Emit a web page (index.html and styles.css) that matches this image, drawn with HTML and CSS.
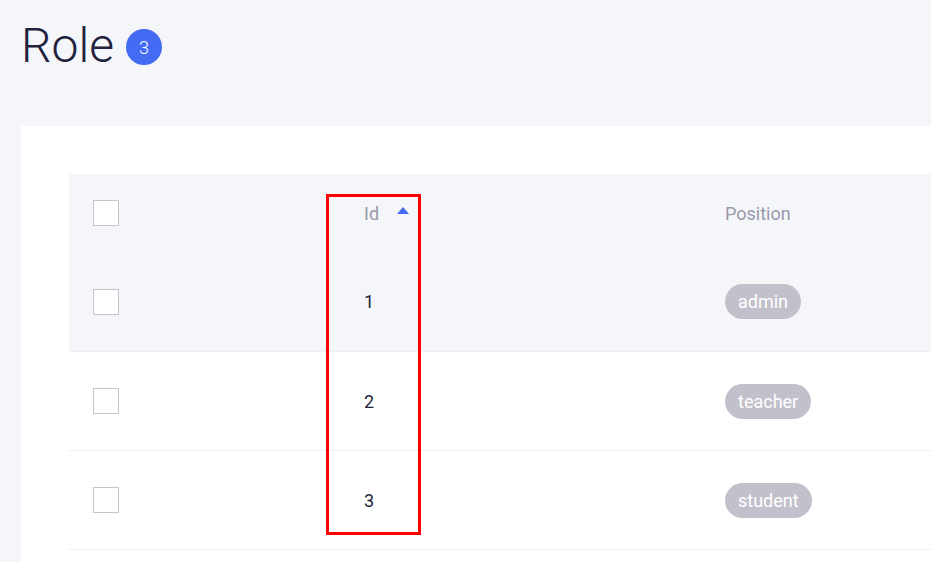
FILE: index.html
```html
<!DOCTYPE html>
<html>
<head>
<meta charset="utf-8">
<link rel="stylesheet" href="styles.css">
</head>
<body>
<header class="page-head">
  <h1 class="title">Role</h1>
  <span class="count">3</span>
</header>
<main class="card">
  <div class="table">
    <div class="row head">
      <div class="cell"><span class="check"></span></div>
      <div class="cell id-cell">Id <span class="sort"></span></div>
      <div class="cell">Position</div>
    </div>
    <div class="row hover">
      <div class="cell"><span class="check"></span></div>
      <div class="cell num">1</div>
      <div class="cell"><span class="pill">admin</span></div>
    </div>
    <div class="row">
      <div class="cell"><span class="check"></span></div>
      <div class="cell num">2</div>
      <div class="cell"><span class="pill">teacher</span></div>
    </div>
    <div class="row">
      <div class="cell"><span class="check"></span></div>
      <div class="cell num">3</div>
      <div class="cell"><span class="pill">student</span></div>
    </div>
    <div class="highlight"></div>
  </div>
</main>
</body>
</html>
```
FILE: styles.css
```css
html, body {
  margin: 0;
  padding: 0;
}
body {
  background: #f5f6fa;
  font-family: Roboto, "Liberation Sans", sans-serif;
  color: #22213d;
  overflow: hidden;
  width: 931px;
  height: 562px;
}
.page-head {
  display: flex;
  align-items: center;
  height: 126px;
  box-sizing: border-box;
  padding: 18px 0 52px 21px;
}
.title {
  margin: 0;
  font-size: 48px;
  font-weight: 300;
  line-height: 56px;
  color: #22213d;
}
.count {
  margin-left: 12px;
  width: 36px;
  height: 36px;
  border-radius: 50%;
  background: #456bf5;
  color: #fff;
  font-size: 18px;
  font-weight: 300;
  display: flex;
  align-items: center;
  justify-content: center;
  margin-top: 2px;
}
.card {
  margin-left: 21px;
  background: #fff;
  padding: 48px 0 0 48px;
  width: 910px;
  height: 436px;
  box-sizing: border-box;
  overflow: hidden;
}
.table {
  position: relative;
  width: 862px;
  height: 388px;
  overflow: hidden;
}
.row {
  display: grid;
  grid-template-columns: 271px 361px 1fr;
  height: 99px;
  box-sizing: border-box;
  border-bottom: 1px solid #efeff3;
  align-items: center;
  font-size: 18px;
}
.row.head {
  height: 78px;
  background: #f5f6fa;
  border-bottom: none;
  color: #9a99a9;
}
.row.hover {
  background: #f5f6fa;
  height: 100px;
}
.cell {
  padding-left: 24px;
  display: flex;
  align-items: center;
}
.check {
  width: 26px;
  height: 26px;
  box-sizing: border-box;
  border: 1px solid #c6c5ce;
  background: #fff;
}
.sort {
  width: 0;
  height: 0;
  border-left: 6px solid transparent;
  border-right: 6px solid transparent;
  border-bottom: 7px solid #456bf5;
  margin-left: 18px;
  margin-top: -5px;
}
.num {
  color: #1f1e3b;
}
.pill {
  display: inline-flex;
  align-items: center;
  height: 35px;
  padding: 0 13px;
  border-radius: 18px;
  background: #c2c1cb;
  color: #fff;
  font-size: 18px;
}
.highlight {
  position: absolute;
  left: 257px;
  top: 20px;
  width: 95px;
  height: 341px;
  box-sizing: border-box;
  border: 3px solid #ff0000;
}
```
